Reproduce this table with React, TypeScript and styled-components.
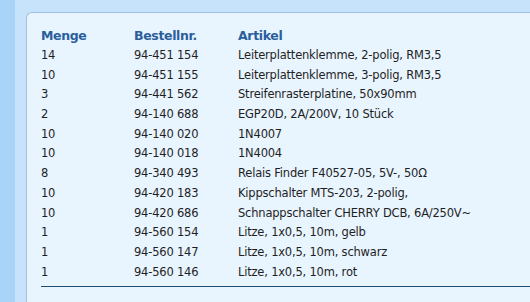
import React from "react";
import styled, { createGlobalStyle } from "styled-components";

const Global = createGlobalStyle`
  html, body { margin: 0; padding: 0; }
  body {
    width: 530px;
    height: 302px;
    overflow: hidden;
    background: #c3e2fb;
    font-family: "DejaVu Sans", Verdana, sans-serif;
  }
`;

const Page = styled.div`
  display: flex;
  height: 302px;
`;

const SideStrip = styled.div`
  width: 15px;
  flex: none;
  background: #a9d4f8;
`;

const Main = styled.div`
  flex: 1;
  display: flex;
  flex-direction: column;
  padding: 12px 0 0 11px;
  background: #c6e3fb;
`;

const Panel = styled.div`
  flex: 1;
  background: #e8f4fe;
  border-top: 1px solid #9fc3de;
  border-left: 1px solid #9fc3de;
  border-top-left-radius: 6px;
  padding: 14px 0 0 14px;
`;

const Table = styled.div`
  display: grid;
  grid-template-columns: 93px 104px 1fr;
  border-bottom: 1px solid #1f4f72;
  padding-bottom: 4px;
`;

const Head = styled.div`
  font-family: "DejaVu Sans", sans-serif;
  font-size: 12.5px;
  font-weight: bold;
  color: #2b5f9c;
  height: 19px;
  line-height: 17px;
  letter-spacing: -0.35px;
`;

const Cell = styled.div`
  font-size: 11.5px;
  color: #1f1f1f;
  height: 19.7px;
  line-height: 19.7px;
  white-space: nowrap;
  letter-spacing: -0.2px;
`;

const rows: [string, string, string][] = [
  ["14", "94-451 154", "Leiterplattenklemme, 2-polig, RM3,5"],
  ["10", "94-451 155", "Leiterplattenklemme, 3-polig, RM3,5"],
  ["3", "94-441 562", "Streifenrasterplatine, 50x90mm"],
  ["2", "94-140 688", "EGP20D, 2A/200V, 10 Stück"],
  ["10", "94-140 020", "1N4007"],
  ["10", "94-140 018", "1N4004"],
  ["8", "94-340 493", "Relais Finder F40527-05, 5V-, 50Ω"],
  ["10", "94-420 183", "Kippschalter MTS-203, 2-polig,"],
  ["10", "94-420 686", "Schnappschalter CHERRY DCB, 6A/250V~"],
  ["1", "94-560 154", "Litze, 1x0,5, 10m, gelb"],
  ["1", "94-560 147", "Litze, 1x0,5, 10m, schwarz"],
  ["1", "94-560 146", "Litze, 1x0,5, 10m, rot"],
];

export default function App() {
  return (
    <>
      <Global />
      <Page>
        <SideStrip />
        <Main>
          <Panel>
            <Table>
              <Head>Menge</Head>
              <Head>Bestellnr.</Head>
              <Head>Artikel</Head>
              {rows.map(([q, n, a]) => (
                <React.Fragment key={n}>
                  <Cell>{q}</Cell>
                  <Cell>{n}</Cell>
                  <Cell>{a}</Cell>
                </React.Fragment>
              ))}
            </Table>
          </Panel>
        </Main>
      </Page>
    </>
  );
}
